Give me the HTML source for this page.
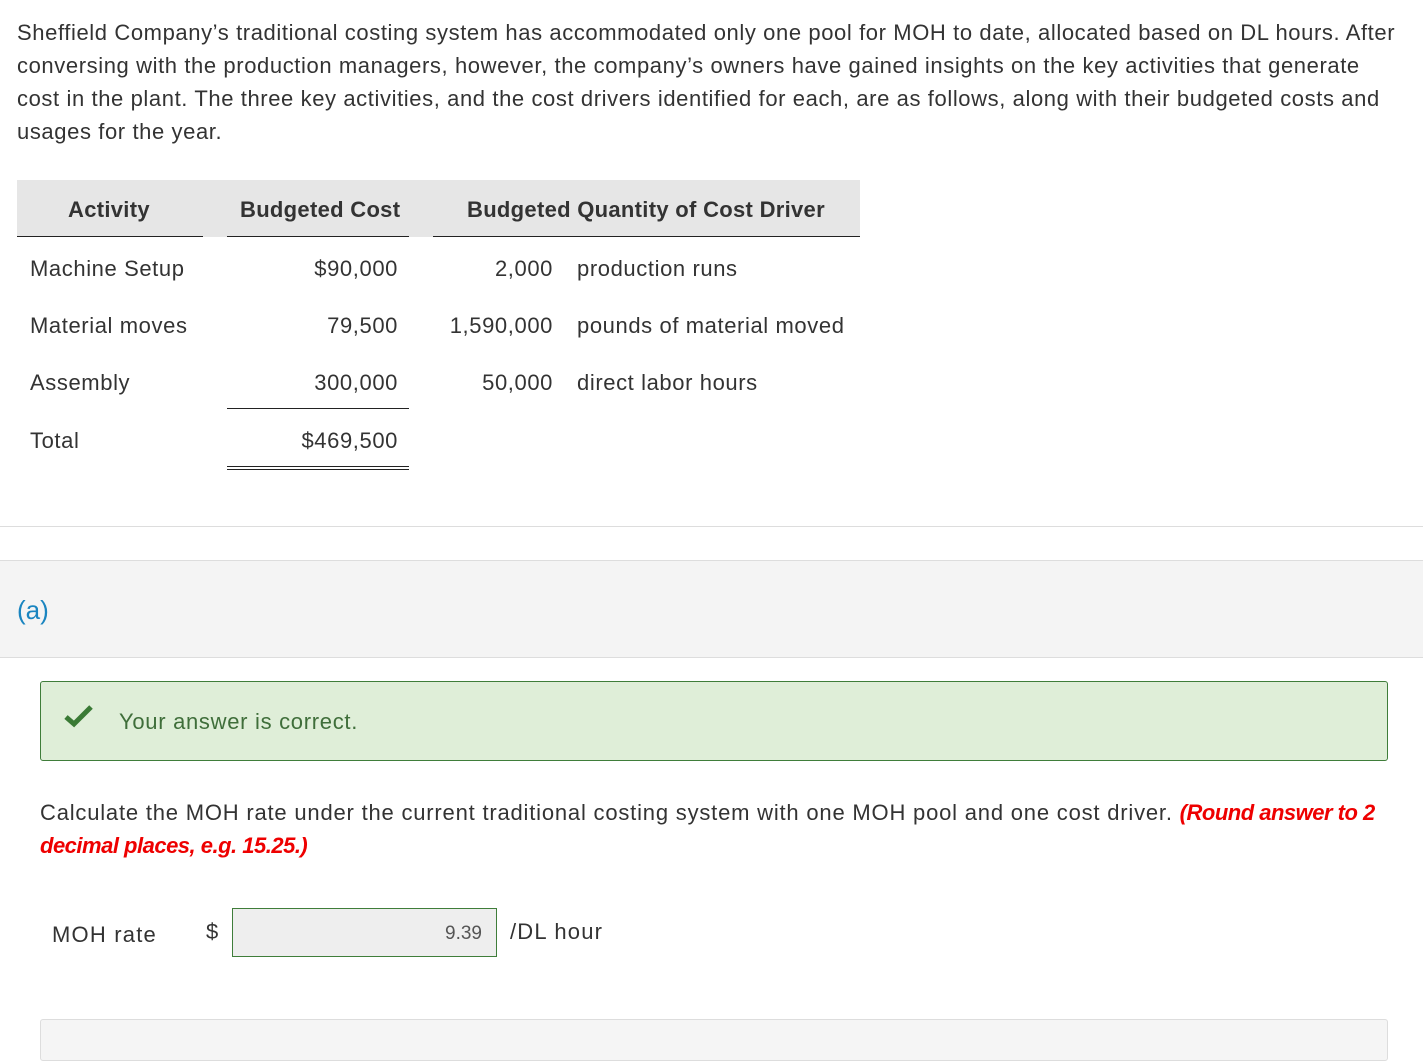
<!DOCTYPE html>
<html><head><meta charset="utf-8"><style>
body{margin:0;width:1423px;height:1041px;overflow:hidden;background:#fff;font-family:"Liberation Sans",sans-serif;color:#333;position:relative}
.a{position:absolute;white-space:nowrap}
.p{font-size:22px;letter-spacing:0.6px;line-height:33px}
.t{font-size:22px;letter-spacing:0.6px}
.b{font-weight:bold;font-size:22px;letter-spacing:0.3px}
.r{text-align:right}
.ln{position:absolute;height:1px;background:#222}
</style></head><body>
<div class="a p" style="left:17px;top:16px">Sheffield Company’s traditional costing system has accommodated only one pool for MOH to date, allocated based on DL hours. After<br>conversing with the production managers, however, the company’s owners have gained insights on the key activities that generate<br>cost in the plant. The three key activities, and the cost drivers identified for each, are as follows, along with their budgeted costs and<br>usages for the year.</div>

<div class="a" style="left:17px;top:180px;width:843px;height:57px;background:#e6e6e6"></div>
<div class="ln" style="left:17px;top:236px;width:186px"></div>
<div class="ln" style="left:227px;top:236px;width:182px"></div>
<div class="ln" style="left:433px;top:236px;width:427px"></div>
<div class="a b" style="left:68px;top:197px">Activity</div>
<div class="a b" style="left:240px;top:197px">Budgeted Cost</div>
<div class="a b" style="left:467px;top:197px">Budgeted Quantity of Cost Driver</div>

<div class="a t" style="left:30px;top:256px">Machine Setup</div>
<div class="a t r" style="left:227px;width:171px;top:256px">$90,000</div>
<div class="a t r" style="left:433px;width:120px;top:256px">2,000</div>
<div class="a t" style="left:577px;top:256px">production runs</div>

<div class="a t" style="left:30px;top:313px">Material moves</div>
<div class="a t r" style="left:227px;width:171px;top:313px">79,500</div>
<div class="a t r" style="left:433px;width:120px;top:313px">1,590,000</div>
<div class="a t" style="left:577px;top:313px">pounds of material moved</div>

<div class="a t" style="left:30px;top:370px">Assembly</div>
<div class="a t r" style="left:227px;width:171px;top:370px">300,000</div>
<div class="a t r" style="left:433px;width:120px;top:370px">50,000</div>
<div class="a t" style="left:577px;top:370px">direct labor hours</div>
<div class="ln" style="left:227px;top:408px;width:182px"></div>

<div class="a t" style="left:30px;top:428px">Total</div>
<div class="a t r" style="left:227px;width:171px;top:428px">$469,500</div>
<div class="ln" style="left:227px;top:466px;width:182px"></div>
<div class="ln" style="left:227px;top:469px;width:182px"></div>

<div class="a" style="left:0;top:526px;width:1423px;height:1px;background:#ddd"></div>
<div class="a" style="left:0;top:560px;width:1423px;height:96px;background:#f4f4f4;border-top:1px solid #ddd;border-bottom:1px solid #ddd"></div>
<div class="a" style="left:17px;top:595px;font-size:26px;color:#1a85c0">(a)</div>

<div class="a" style="left:40px;top:681px;width:1346px;height:78px;background:#dfeed8;border:1px solid #3f7d3a;border-radius:3px"></div>
<svg class="a" style="left:64px;top:704px" width="30" height="24" viewBox="0 0 30 24"><path d="M2 13 L10 20 L27 3" fill="none" stroke="#3a7a35" stroke-width="5"/></svg>
<div class="a" style="left:119px;top:709px;font-size:22px;color:#3f6e3a;letter-spacing:0.7px">Your answer is correct.</div>

<div class="a p" style="left:40px;top:796px;letter-spacing:0.8px">Calculate the MOH rate under the current traditional costing system with one MOH pool and one cost driver. <b style="color:#e00;font-style:italic;letter-spacing:-0.5px">(Round answer to 2</b><br><b style="color:#e00;font-style:italic;letter-spacing:-0.5px">decimal places, e.g. 15.25.)</b></div>

<div class="a t" style="left:52px;top:922px;letter-spacing:1.2px">MOH rate</div>
<div class="a t" style="left:206px;top:919px">$</div>
<div class="a" style="left:232px;top:908px;width:263px;height:47px;background:#eee;border:1px solid #3f7d3a"></div>
<div class="a r" style="left:232px;width:250px;top:923px;font-size:19px;color:#555">9.39</div>
<div class="a t" style="left:510px;top:919px;letter-spacing:1.2px">/DL hour</div>

<div class="a" style="left:40px;top:1019px;width:1346px;height:40px;background:#f5f5f5;border:1px solid #ddd;border-radius:3px"></div>
</body></html>
